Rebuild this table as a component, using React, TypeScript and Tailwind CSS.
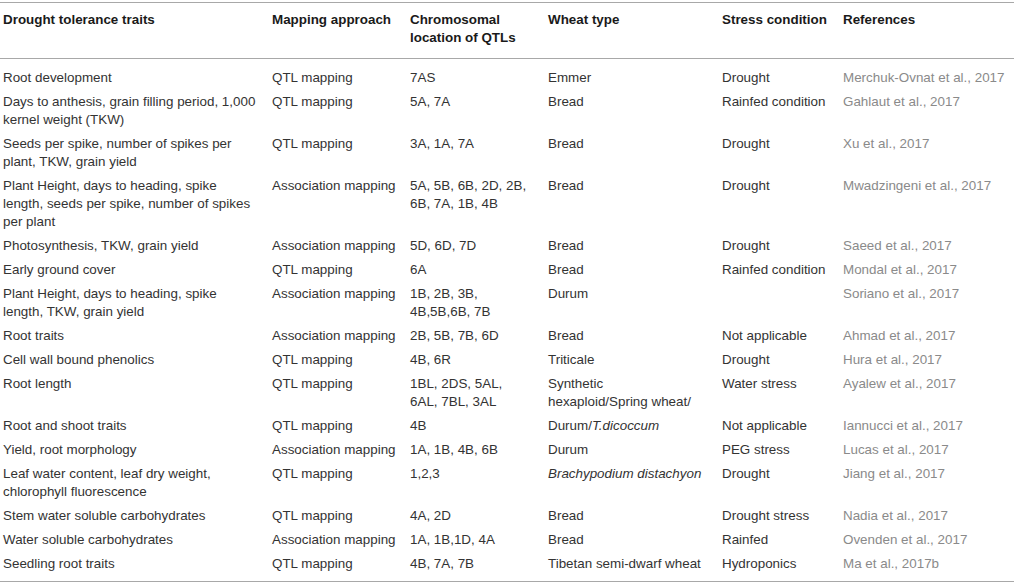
import React from 'react';

type Row = {
  trait: string;
  approach: string;
  location: string;
  wheat: React.ReactNode;
  stress: string;
  reference: string;
};

const rows: Row[] = [
  { trait: 'Root development', approach: 'QTL mapping', location: '7AS', wheat: 'Emmer', stress: 'Drought', reference: 'Merchuk-Ovnat et al., 2017' },
  { trait: 'Days to anthesis, grain filling period, 1,000 kernel weight (TKW)', approach: 'QTL mapping', location: '5A, 7A', wheat: 'Bread', stress: 'Rainfed condition', reference: 'Gahlaut et al., 2017' },
  { trait: 'Seeds per spike, number of spikes per plant, TKW, grain yield', approach: 'QTL mapping', location: '3A, 1A, 7A', wheat: 'Bread', stress: 'Drought', reference: 'Xu et al., 2017' },
  { trait: 'Plant Height, days to heading, spike length, seeds per spike, number of spikes per plant', approach: 'Association mapping', location: '5A, 5B, 6B, 2D, 2B, 6B, 7A, 1B, 4B', wheat: 'Bread', stress: 'Drought', reference: 'Mwadzingeni et al., 2017' },
  { trait: 'Photosynthesis, TKW, grain yield', approach: 'Association mapping', location: '5D, 6D, 7D', wheat: 'Bread', stress: 'Drought', reference: 'Saeed et al., 2017' },
  { trait: 'Early ground cover', approach: 'QTL mapping', location: '6A', wheat: 'Bread', stress: 'Rainfed condition', reference: 'Mondal et al., 2017' },
  { trait: 'Plant Height, days to heading, spike length, TKW, grain yield', approach: 'Association mapping', location: '1B, 2B, 3B, 4B,5B,6B, 7B', wheat: 'Durum', stress: '', reference: 'Soriano et al., 2017' },
  { trait: 'Root traits', approach: 'Association mapping', location: '2B, 5B, 7B, 6D', wheat: 'Bread', stress: 'Not applicable', reference: 'Ahmad et al., 2017' },
  { trait: 'Cell wall bound phenolics', approach: 'QTL mapping', location: '4B, 6R', wheat: 'Triticale', stress: 'Drought', reference: 'Hura et al., 2017' },
  { trait: 'Root length', approach: 'QTL mapping', location: '1BL, 2DS, 5AL, 6AL, 7BL, 3AL', wheat: 'Synthetic hexaploid/Spring wheat/', stress: 'Water stress', reference: 'Ayalew et al., 2017' },
  {
    trait: 'Root and shoot traits',
    approach: 'QTL mapping',
    location: '4B',
    wheat: (
      <>
        Durum/<i>T.dicoccum</i>
      </>
    ),
    stress: 'Not applicable',
    reference: 'Iannucci et al., 2017',
  },
  { trait: 'Yield, root morphology', approach: 'Association mapping', location: '1A, 1B, 4B, 6B', wheat: 'Durum', stress: 'PEG stress', reference: 'Lucas et al., 2017' },
  {
    trait: 'Leaf water content, leaf dry weight, chlorophyll fluorescence',
    approach: 'QTL mapping',
    location: '1,2,3',
    wheat: <i>Brachypodium distachyon</i>,
    stress: 'Drought',
    reference: 'Jiang et al., 2017',
  },
  { trait: 'Stem water soluble carbohydrates', approach: 'QTL mapping', location: '4A, 2D', wheat: 'Bread', stress: 'Drought stress', reference: 'Nadia et al., 2017' },
  { trait: 'Water soluble carbohydrates', approach: 'Association mapping', location: '1A, 1B,1D, 4A', wheat: 'Bread', stress: 'Rainfed', reference: 'Ovenden et al., 2017' },
  { trait: 'Seedling root traits', approach: 'QTL mapping', location: '4B, 7A, 7B', wheat: 'Tibetan semi-dwarf wheat', stress: 'Hydroponics', reference: 'Ma et al., 2017b' },
];

// cell widths + right padding tuned so lines wrap like the source table
const cols = [
  { w: 'w-[269px]', pr: 'pr-[12.5px]' },
  { w: 'w-[138px]', pr: 'pr-[3px]' },
  { w: 'w-[138px]', pr: 'pr-[15px]' },
  { w: 'w-[174px]', pr: 'pr-[15px]' },
  { w: 'w-[121px]', pr: 'pr-[3px]' },
  { w: 'w-[174px]', pr: 'pr-[3px]' },
];

export default function App() {
  const headers = [
    'Drought tolerance traits',
    'Mapping approach',
    'Chromosomal location of QTLs',
    'Wheat type',
    'Stress condition',
    'References',
  ];

  return (
    <div className="w-[1016px] h-[584px] bg-white pt-[2px] font-['Liberation_Sans',Arial,sans-serif] text-[13.4px] leading-[18px] text-[#333]">
      <table className="w-[1014px] table-fixed border-collapse border-y border-[#a8a8a8]">
        <colgroup>
          {cols.map((c, i) => (
            <col key={i} className={c.w} />
          ))}
        </colgroup>
        <thead>
          <tr className="border-b border-[#a8a8a8]">
            {headers.map((h, i) => (
              <th
                key={h}
                className={`pl-[3px] ${cols[i].pr} pt-[8px] pb-[11px] text-left align-top font-bold text-[#1a1a1a]`}
              >
                {h}
              </th>
            ))}
          </tr>
        </thead>
        <tbody>
          {rows.map((r, i) => {
            const pad = i === 0 ? 'pt-[10px] pb-[3px]' : i === rows.length - 1 ? 'pt-[3px] pb-[8px]' : 'py-[3px]';
            const cells = [r.trait, r.approach, r.location, r.wheat, r.stress, r.reference];
            return (
              <tr key={i}>
                {cells.map((c, j) => (
                  <td
                    key={j}
                    className={`pl-[3px] ${cols[j].pr} ${pad} align-top ${j === 5 ? 'text-[#8a8a8a]' : ''}`}
                  >
                    {c}
                  </td>
                ))}
              </tr>
            );
          })}
        </tbody>
      </table>
    </div>
  );
}
